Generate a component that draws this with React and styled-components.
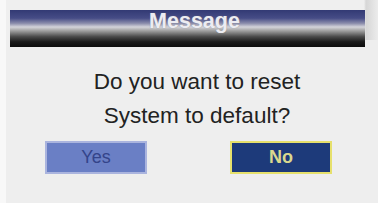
import React from 'react'
import styled, { createGlobalStyle } from 'styled-components'

const GlobalStyle = createGlobalStyle`
  html, body {
    margin: 0;
    padding: 0;
    background: #f8f8f8;
    font-family: "Liberation Sans", Arial, sans-serif;
  }
`

const Dialog = styled.div`
  margin-left: 6px;
  width: 372px;
  height: 203px;
  background: #eeeeee;
  display: flex;
  flex-direction: column;
`

const HeaderRow = styled.div`
  display: flex;
  padding-top: 10px;
  background: linear-gradient(to right, #efefef 0px, #efefef 358px, #d6d6d6 360px, #ececec 372px);
  height: 40px;
  box-sizing: border-box;
  background-size: 100% 40px;
  background-repeat: no-repeat;
`

const TitleBar = styled.div`
  margin-left: 4px;
  width: 355px;
  height: 37px;
  box-sizing: border-box;
  padding-left: 14px;
  background: linear-gradient(
    to bottom,
    #323a74 0%,
    #464c86 22%,
    #8a8cab 36%,
    #d4d4da 46%,
    #a0a0a0 56%,
    #4a4a4a 72%,
    #1a1a1a 86%,
    #0c0c0c 100%
  );
  display: flex;
  justify-content: center;
  color: #ececf2;
  font-size: 21.5px;
  font-weight: bold;
  line-height: 22px;
  text-shadow: 0 0 1px #888;
`

const Body = styled.div`
  display: flex;
  flex-direction: column;
  align-items: center;
  padding-top: 25px;
  padding-left: 10px;
`

const Line = styled.div`
  font-size: 22.5px;
  color: #222222;
  line-height: 34px;
`

const Buttons = styled.div`
  display: flex;
  justify-content: space-between;
  padding: 8px 46px 0 39px;
`

const Button = styled.div`
  width: 102px;
  height: 33px;
  box-sizing: border-box;
  display: flex;
  align-items: center;
  justify-content: center;
  font-size: 18px;
  background: ${p => (p.$active ? '#1d3a7a' : '#6a7fc5')};
  color: ${p => (p.$active ? '#d9d88e' : '#34448a')};
  border: 2px solid ${p => (p.$active ? '#e6e06c' : '#aab4de')};
  font-weight: ${p => (p.$active ? 'bold' : 'normal')};
`

export default function App() {
  return (
    <>
      <GlobalStyle />
      <Dialog>
        <HeaderRow>
          <TitleBar>Message</TitleBar>
        </HeaderRow>
        <Body>
          <Line>Do you want to reset</Line>
          <Line>System to default?</Line>
        </Body>
        <Buttons>
          <Button>Yes</Button>
          <Button $active>No</Button>
        </Buttons>
      </Dialog>
    </>
  )
}
